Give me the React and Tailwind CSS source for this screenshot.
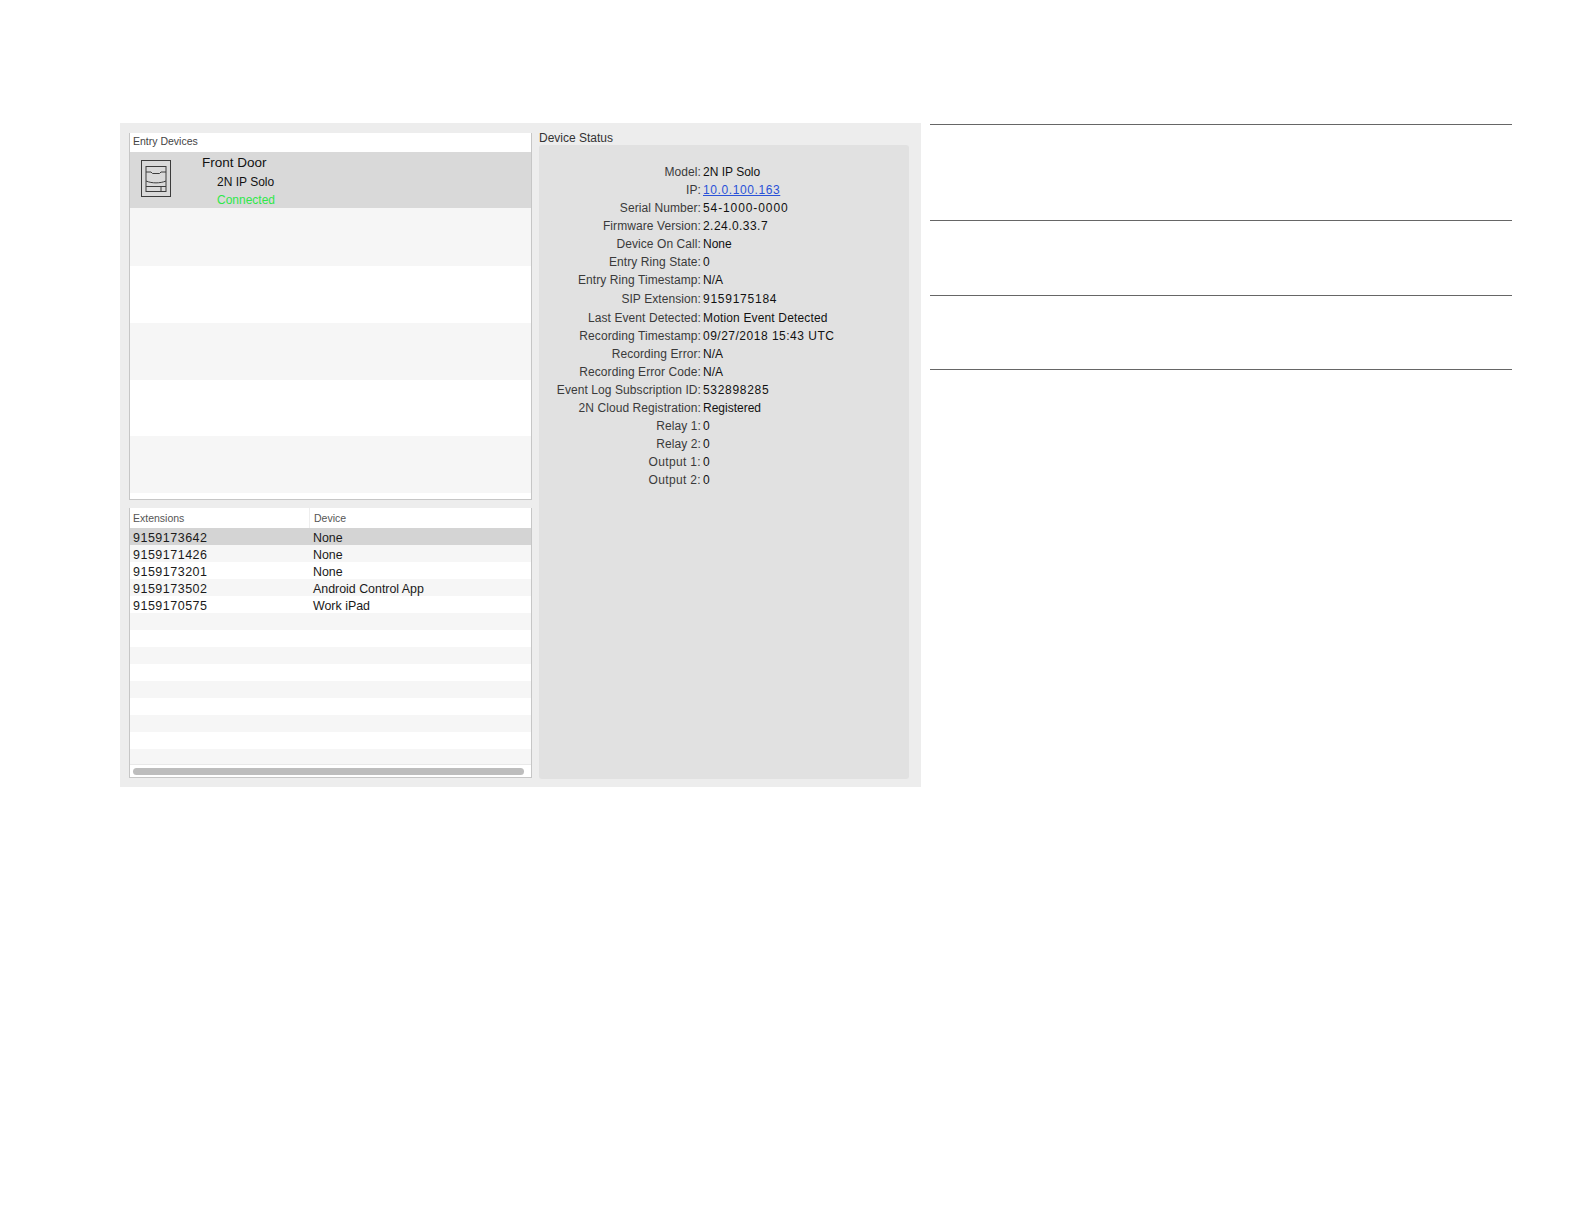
const statusRows = [
  { label: "Model:", value: "2N IP Solo" },
  { label: "IP:", value: "10.0.100.163", link: true },
  { label: "Serial Number:", value: "54-1000-0000", track: "tracking-[0.9px]" },
  { label: "Firmware Version:", value: "2.24.0.33.7", track: "tracking-[0.45px]" },
  { label: "Device On Call:", value: "None" },
  { label: "Entry Ring State:", value: "0", track: "tracking-[0.5px]" },
  { label: "Entry Ring Timestamp:", value: "N/A" },
  { label: "SIP Extension:", value: "9159175184", tall: true, track: "tracking-[0.75px]" },
  { label: "Last Event Detected:", value: "Motion Event Detected", tall: true, track: "tracking-[0.15px]" },
  { label: "Recording Timestamp:", value: "09/27/2018 15:43 UTC", track: "tracking-[0.5px]" },
  { label: "Recording Error:", value: "N/A" },
  { label: "Recording Error Code:", value: "N/A" },
  { label: "Event Log Subscription ID:", value: "532898285", track: "tracking-[0.7px]" },
  { label: "2N Cloud Registration:", value: "Registered" },
  { label: "Relay 1:", value: "0", track: "tracking-[0.5px]" },
  { label: "Relay 2:", value: "0", track: "tracking-[0.5px]" },
  { label: "Output 1:", value: "0", track: "tracking-[0.5px]", wide: true },
  { label: "Output 2:", value: "0", track: "tracking-[0.5px]", wide: true },
];

const extensions = [
  { ext: "9159173642", device: "None" },
  { ext: "9159171426", device: "None" },
  { ext: "9159173201", device: "None" },
  { ext: "9159173502", device: "Android Control App" },
  { ext: "9159170575", device: "Work iPad" },
  {}, {}, {}, {}, {}, {}, {}, {},
];

const DoorIcon = () => (
  <svg width="32" height="38" viewBox="0 0 32 38" fill="none" stroke="#3c3c3c" strokeWidth="1">
    <rect x="1.5" y="1.5" width="29" height="36" />
    <rect x="6" y="7.5" width="20" height="25" />
    <path d="M6 13 H11 L12.5 14.5 H19.5 L21 13 H26" />
    <path d="M6 22 C12 24.5 20 24.5 26 22" />
    <path d="M6 27.5 H26 M21 27.5 V32.5" />
  </svg>
);

const App = () => {
  return (
    <div className="min-h-screen bg-white pt-[123px] pl-[120px] flex items-start font-['Liberation_Sans',Arial,sans-serif] text-[12px] text-[#1c1c1c]">
      <div className="w-[801px] h-[664px] bg-[#ededed] flex pl-[9px] pt-[10px] pb-[8px]">
        {/* Left column */}
        <div className="w-[403px] flex flex-col gap-[8px] pb-[1px]">
          <div className="h-[367px] bg-white border-x border-b border-[#c6c6c6] border-t-0 flex flex-col overflow-hidden">
            <div className="h-[19px] flex items-center pl-[3px] pb-[1px] text-[10.5px] text-[#444] shrink-0">Entry Devices</div>
            <div className="h-[56px] bg-[#d9d9d9] flex shrink-0">
              <div className="w-[72px] pl-[10px] pt-[7px] shrink-0">
                <DoorIcon />
              </div>
              <div className="flex flex-col">
                <div className="h-[20px] text-[13.5px] leading-[21px] text-[#111]">Front Door</div>
                <div className="h-[18px] pl-[15px] pt-[1px] leading-[19px] text-[#111]">2N IP Solo</div>
                <div className="h-[18px] pl-[15px] pt-[1px] leading-[18px] text-[#2fe84a]">Connected</div>
              </div>
            </div>
            <div className="h-[58px] bg-[#f6f6f6] shrink-0" />
            <div className="h-[57px] shrink-0" />
            <div className="h-[57px] bg-[#f6f6f6] shrink-0" />
            <div className="h-[56px] shrink-0" />
            <div className="h-[57px] bg-[#f6f6f6] shrink-0" />
          </div>

          <div className="h-[270px] bg-white border-x border-b border-[#c6c6c6] flex flex-col overflow-hidden">
            <div className="h-[20px] flex items-center text-[10.5px] text-[#555] shrink-0">
              <div className="w-[180px] pl-[3px] pt-[1px] border-r border-[#eeeeee] h-full flex items-center">Extensions</div>
              <div className="pl-[4px] pt-[1px]">Device</div>
            </div>
            {extensions.map((row, index) => (
              <div
                key={index}
                className={`h-[17px] flex items-center shrink-0 pt-[3px] text-[12.5px] text-[#1a1a1a] ${
                  index === 0 ? "bg-[#d4d4d4]" : index % 2 === 1 ? "bg-[#f6f6f6]" : "bg-white"
                }`}
              >
                <div className="w-[180px] pl-[3px] tracking-[0.5px]">{row.ext}</div>
                <div className="pl-[3px] text-[12.4px]">{row.device}</div>
              </div>
            ))}
            <div className="h-[15px] bg-[#f6f6f6] shrink-0" />
            <div className="flex-1 border-t border-[#e8e8e8] px-[3px] pt-[3px]">
              <div className="h-[7px] w-[391px] rounded-full bg-[#bdbdbd]" />
            </div>
          </div>
        </div>

        {/* Device status */}
        <div className="w-[370px] ml-[7px] flex flex-col">
          <div className="h-[12px] pt-[1px] leading-[8px] text-[12px] text-[#333]">Device Status</div>
          <div className="flex-1 bg-[#e1e1e1] rounded-[3px] pt-[18px]">
            {statusRows.map((row) => (
              <div key={row.label} className={`flex items-center ${row.tall ? "h-[19px]" : "h-[18px]"}`}>
                <div className={`w-[162px] shrink-0 text-right text-[#3a3a3a] whitespace-nowrap ${row.wide ? "tracking-[0.35px]" : "tracking-[0.08px]"}`}>
                  {row.label}
                </div>
                <div className={`pl-[2px] text-[#111] whitespace-nowrap ${row.track || ""}`}>
                  {row.link ? (
                    <a href="#" className="text-[#2a52d8] underline tracking-[0.6px]">{row.value}</a>
                  ) : (
                    row.value
                  )}
                </div>
              </div>
            ))}
          </div>
        </div>
      </div>

      {/* Right side rules */}
      <div className="w-[582px] ml-[9px] pt-[1px]">
        <div className="h-[96px] border-t border-[#666]" />
        <div className="h-[75px] border-t border-[#666]" />
        <div className="h-[74px] border-t border-[#666]" />
        <div className="border-t border-[#666]" />
      </div>
    </div>
  );
};

export default App;
